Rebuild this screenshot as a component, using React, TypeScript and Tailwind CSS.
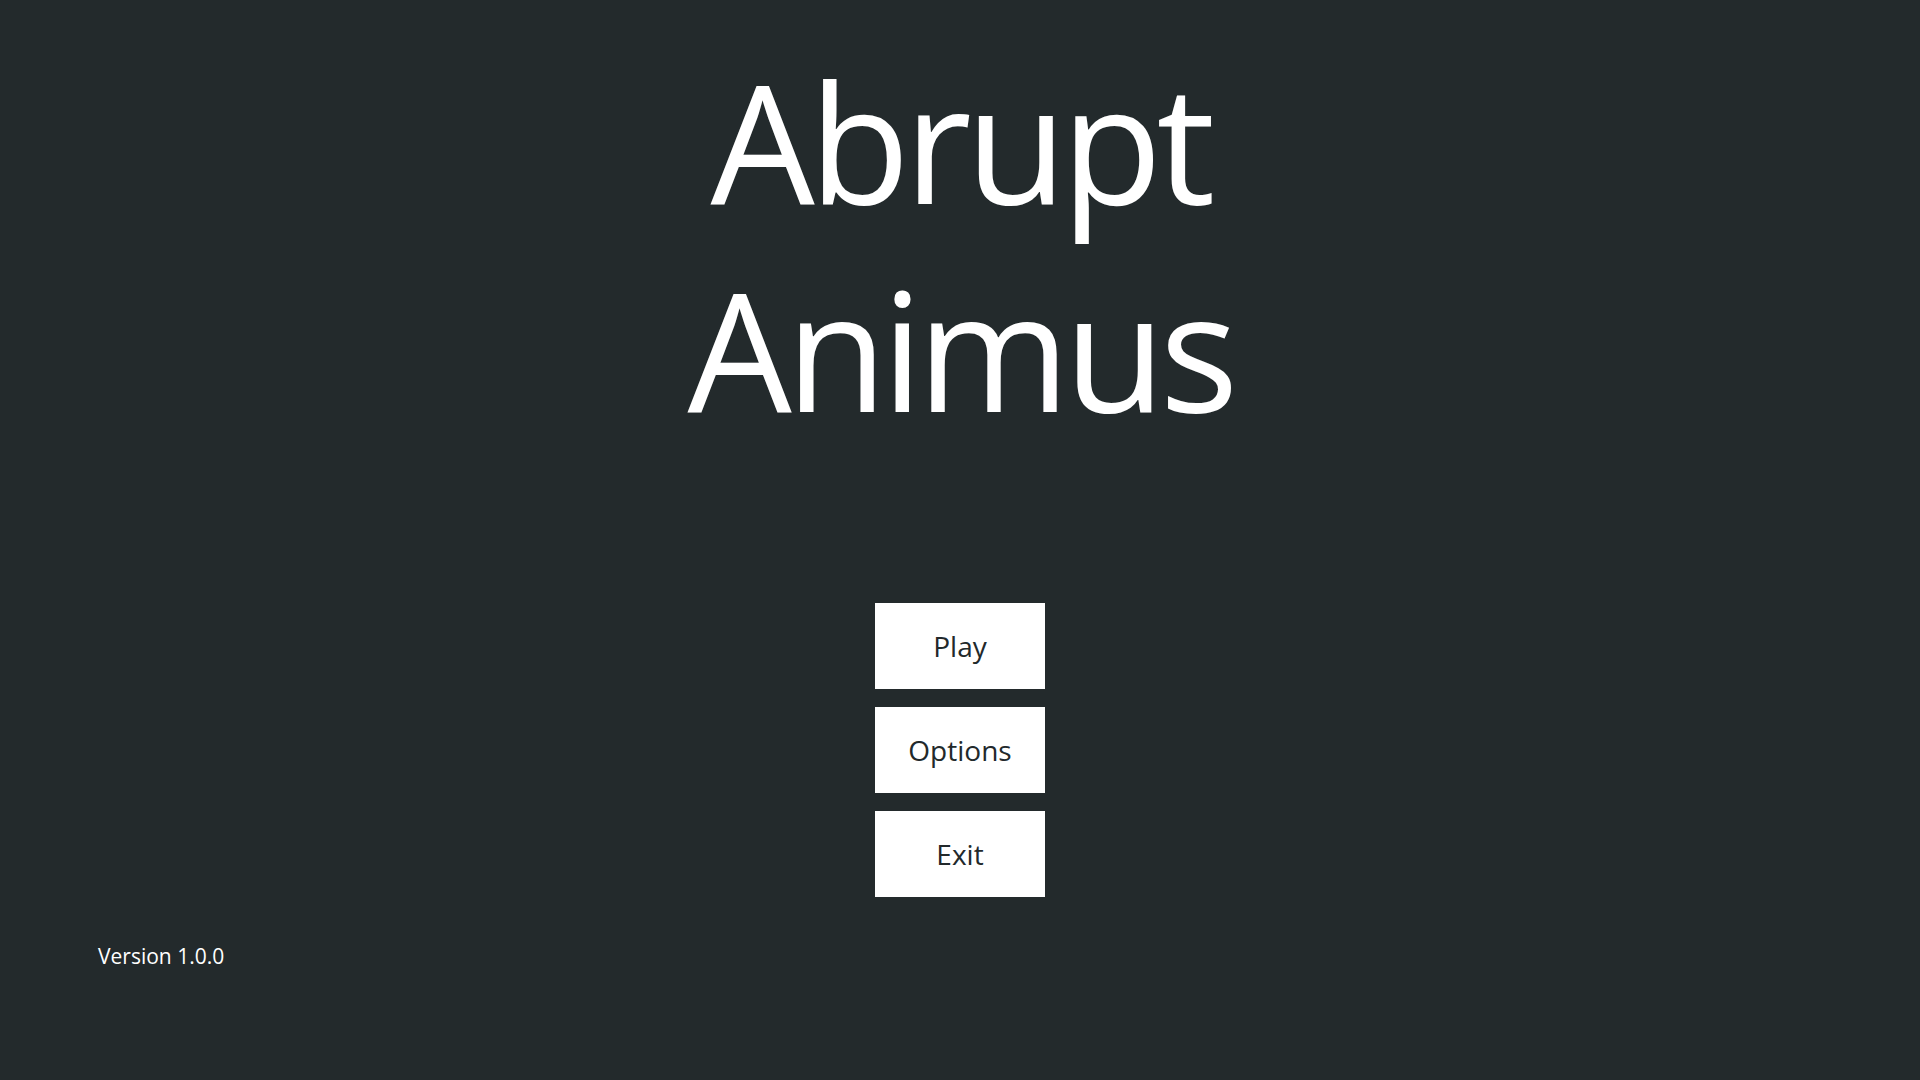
export default function App() {
  const buttons = ["Play", "Options", "Exit"];

  return (
    <div
      className="flex h-[1080px] w-full flex-col items-center overflow-hidden bg-[#232a2c] text-white"
      style={{ fontFamily: '"Open Sans", "Noto Sans", sans-serif' }}
    >
      {/* Title */}
      <h1 className="pt-[36px] text-center text-[165px] font-normal leading-[208px] tracking-[-0.035em] text-white">
        <div>Abrupt</div>
        <div>Animus</div>
      </h1>

      {/* Menu */}
      <div className="mt-[151px] flex flex-col gap-[18px]">
        {buttons.map((label) => (
          <button
            key={label}
            type="button"
            className="flex h-[86px] w-[170px] items-center justify-center bg-white text-[28px] text-[#22292b]"
          >
            {label}
          </button>
        ))}
      </div>

      {/* Version */}
      <div className="mt-[45px] self-start pl-[98px] text-[21px] leading-[28px] text-white">
        Version 1.0.0
      </div>
    </div>
  );
}
